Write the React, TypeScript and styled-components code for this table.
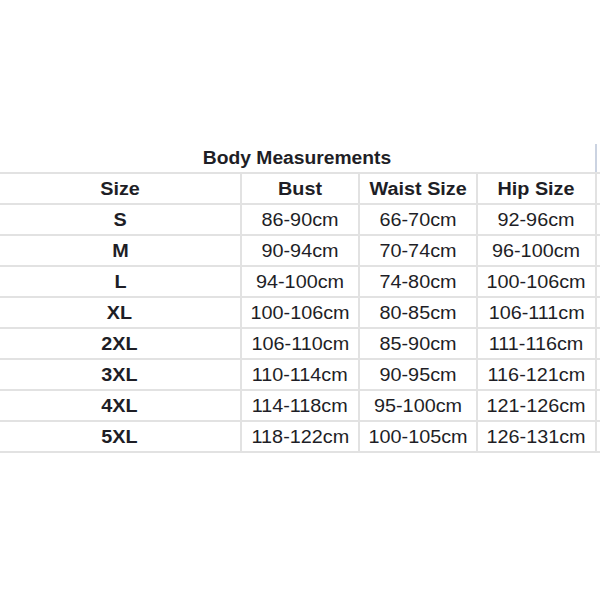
import React from "react";
import styled, { createGlobalStyle } from "styled-components";

const Global = createGlobalStyle`
  html, body { margin: 0; padding: 0; background: #ffffff; }
  body { width: 600px; height: 600px; overflow: hidden; font-family: "Liberation Sans", Arial, sans-serif; }
`;

const Page = styled.div`
  width: 600px;
  height: 600px;
  padding-top: 144px;
  box-sizing: border-box;
  background: #ffffff;
  overflow: hidden;
`;

const Grid = styled.div`
  display: grid;
  grid-template-columns: 240px 116px 116px 117px 1fr;
  grid-template-rows: 28px repeat(9, 29px);
  column-gap: 2px;
  row-gap: 2px;
  padding-bottom: 2px;
  background: #e2e2e2;
  width: 600px;
`;

const Cell = styled.div<{ $bold?: boolean }>`
  background: #ffffff;
  display: flex;
  align-items: center;
  justify-content: center;
  padding-top: 1px;
  color: #1e1e26;
  font-size: 18px;
  font-weight: ${(p) => (p.$bold ? 700 : 400)};
  white-space: nowrap;
`;

const TitleCell = styled(Cell)`
  grid-column: 1 / 5;
`;

const TitleEdge = styled.div`
  background: #ffffff;
  margin-left: -2px;
  border-left: 2px solid #cbd3e1;
`;

const Text = styled.span<{ $sx?: number }>`
  display: inline-block;
  transform: scaleX(${(p) => p.$sx ?? 1.1});
`;

const rows: [string, string, string, string][] = [
  ["S", "86-90cm", "66-70cm", "92-96cm"],
  ["M", "90-94cm", "70-74cm", "96-100cm"],
  ["L", "94-100cm", "74-80cm", "100-106cm"],
  ["XL", "100-106cm", "80-85cm", "106-111cm"],
  ["2XL", "106-110cm", "85-90cm", "111-116cm"],
  ["3XL", "110-114cm", "90-95cm", "116-121cm"],
  ["4XL", "114-118cm", "95-100cm", "121-126cm"],
  ["5XL", "118-122cm", "100-105cm", "126-131cm"],
];

const headers = ["Size", "Bust", "Waist Size", "Hip Size"];

export default function App() {
  return (
    <>
      <Global />
      <Page>
        <Grid>
          <TitleCell $bold>
            <Text $sx={1.07}>Body Measurements</Text>
          </TitleCell>
          <TitleEdge />
          {headers.map((h) => (
            <Cell key={h} $bold>
              <Text>{h}</Text>
            </Cell>
          ))}
          <Cell />
          {rows.map((r) => (
            <React.Fragment key={r[0]}>
              <Cell $bold>
                <Text>{r[0]}</Text>
              </Cell>
              <Cell>
                <Text>{r[1]}</Text>
              </Cell>
              <Cell>
                <Text>{r[2]}</Text>
              </Cell>
              <Cell>
                <Text>{r[3]}</Text>
              </Cell>
              <Cell />
            </React.Fragment>
          ))}
        </Grid>
      </Page>
    </>
  );
}
